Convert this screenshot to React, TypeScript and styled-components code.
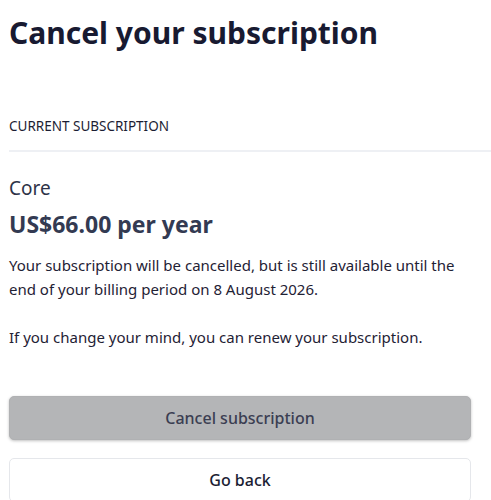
import styled, { createGlobalStyle } from 'styled-components'

const Global = createGlobalStyle`
  body {
    margin: 0;
    background: #ffffff;
    font-family: 'Noto Sans', 'Open Sans', sans-serif;
  }
`

const Page = styled.main`
  padding: 0 0 0 9px;
  color: #1b1d33;
`

const Title = styled.h1`
  margin: 0;
  padding-top: 12px;
  font-size: 30px;
  line-height: 42px;
  font-weight: 700;
  color: #181a31;
`

const Section = styled.section`
  margin-top: 62px;
`

const SectionLabel = styled.div`
  font-size: 13.5px;
  line-height: 20px;
  text-transform: uppercase;
  color: #1b1d33;
  padding-bottom: 14px;
  border-bottom: 2px solid #eef0f4;
`

const Details = styled.div`
  padding-right: 20px;
  padding-top: 23px;
`

const PlanName = styled.div`
  font-size: 19px;
  line-height: 26px;
  color: #2e3348;
`

const Price = styled.div`
  margin-top: 8px;
  font-size: 23px;
  line-height: 30px;
  font-weight: 700;
  color: #333a52;
`

const Body = styled.p`
  margin: 14px 0 0;
  font-size: 15px;
  line-height: 24px;
  color: #1f2235;
`

const Actions = styled.div`
  display: flex;
  flex-direction: column;
  gap: 18px;
  margin-top: 47px;
`

const Button = styled.button<{ $variant: 'disabled' | 'outline' }>`
  width: 100%;
  height: 44px;
  border-radius: 5px;
  font-family: inherit;
  font-size: 16px;
  font-weight: 500;
  cursor: pointer;
  color: ${p => (p.$variant === 'disabled' ? '#3b3e52' : '#1b1d33')};
  background: ${p => (p.$variant === 'disabled' ? '#b4b5b7' : '#ffffff')};
  border: 1px solid ${p => (p.$variant === 'disabled' ? '#b0b1b3' : '#e5e7eb')};
  box-shadow: ${p =>
    p.$variant === 'disabled' ? '0 1px 3px rgba(0,0,0,0.25)' : 'none'};
`

export default function App() {
  return (
    <>
      <Global />
      <Page>
        <Title>Cancel your subscription</Title>
        <Section>
          <SectionLabel>Current subscription</SectionLabel>
          <Details>
            <PlanName>Core</PlanName>
            <Price>US$66.00 per year</Price>
            <Body>
              Your subscription will be cancelled, but is still available until
              the end of your billing period on 8 August 2026.
              <br />
              <br />
              If you change your mind, you can renew your subscription.
            </Body>
            <Actions>
              <Button $variant='disabled'>Cancel subscription</Button>
              <Button $variant='outline'>Go back</Button>
            </Actions>
          </Details>
        </Section>
      </Page>
    </>
  )
}
